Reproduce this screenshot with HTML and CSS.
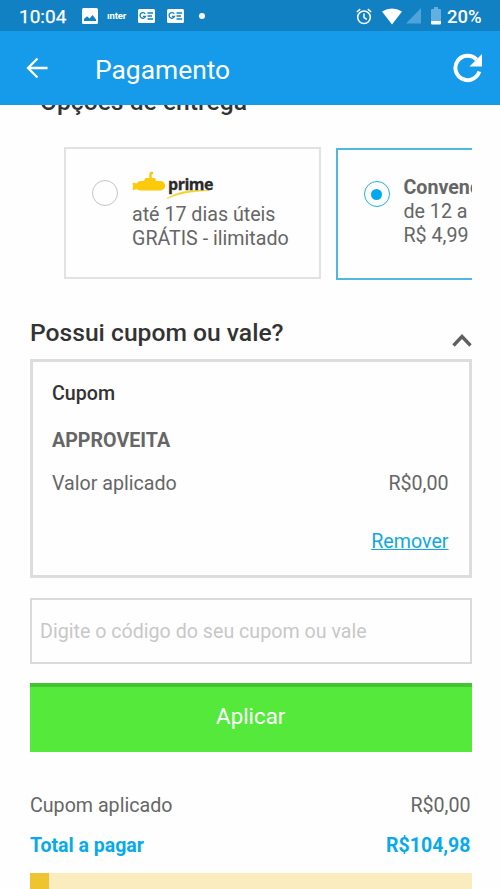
FILE: index.html
```html
<!DOCTYPE html>
<html lang="pt-BR">
<head>
<meta charset="utf-8">
<title>Pagamento</title>
<link rel="stylesheet" href="styles.css">
</head>
<body>
<div class="status">
  <span class="clock">10:04</span>
  <svg class="photo" width="16" height="16" viewBox="0 0 16 16"><rect width="16" height="16" rx="1.5" fill="#fff"/><path d="M2 13V11l3-2.700 2.500 2.200 3-3.500 3.500 4.500V13z" fill="#1181c4"/></svg>
  <span class="bank">ınter</span>
  <span class="news"><svg width="17" height="14" viewBox="0 0 17 14"><rect width="17" height="14" rx="1.5" fill="#fff"/><path d="M7.200 4.900A2.800 2.800 0 1 0 7.500 7.400H5M9.500 4h5.500M9.500 7h4.500M9.500 10h5.500" fill="none" stroke="#1181c4" stroke-width="1.3"/></svg></span>
  <span class="news"><svg width="17" height="14" viewBox="0 0 17 14"><rect width="17" height="14" rx="1.5" fill="#fff"/><path d="M7.200 4.900A2.800 2.800 0 1 0 7.500 7.400H5M9.500 4h5.500M9.500 7h4.500M9.500 10h5.500" fill="none" stroke="#1181c4" stroke-width="1.3"/></svg></span>
  <i class="dot"></i>
  <div class="system">
    <svg width="16" height="17" viewBox="0 0 16 17" fill="none" stroke="#fff" stroke-width="1.5"><circle cx="8" cy="9.3" r="6.3"/><path d="M8 5.500v4l2.800 1.800M.8 4 4.200 1.200M15.200 4l-3.400-2.800"/></svg>
    <svg class="wifi" width="20" height="17" viewBox="0 0 20 17"><path d="M0 3.600Q10-2.800 20 3.600L10 16.500z" fill="#fff"/></svg>
    <svg class="signal" width="15" height="16" viewBox="0 0 15 16"><path d="M15 0v15.500H0z" fill="#4fa3d9"/></svg>
    <svg class="battery" width="10" height="18" viewBox="0 0 10 18"><path d="M3 0h4v2h2a1 1 0 0 1 1 1v11H0V3a1 1 0 0 1 1-1h2z" fill="#62b0e2"/><path d="M0 14h10v2.500a1 1 0 0 1-1 1H1a1 1 0 0 1-1-1z" fill="#fff"/></svg>
    <span class="percent">20%</span>
  </div>
</div>
<header class="appbar">
  <svg width="22" height="22" viewBox="0 0 22 22" fill="none" stroke="#fff" stroke-width="2.3"><path d="M21.500 11H2M11.500 1.500 2 11l9.500 9.500"/></svg>
  <h1>Pagamento</h1>
  <svg class="reload" width="30" height="30" viewBox="0 0 30 30"><path d="M23.500 6.500A12.200 12.200 0 1 0 26.300 18.500" fill="none" stroke="#fff" stroke-width="4"/><path d="M29 1v12.500H16.500z" fill="#fff"/></svg>
</header>
<main>
  <h2 class="delivery-title">Opções de entrega</h2>
  <div class="options">
    <div class="option">
      <span class="radio"></span>
      <div class="detail">
        <div class="prime">
          <svg width="82" height="32" viewBox="0 0 82 32"><path d="M17.300 7V3.500Q17.300.8 19.500.8H21V3h-1.200v4H22q1.300 0 1.500 1.200l.5 1.800h4.500a4.700 4.700 0 0 1 0 9.400H8.500Q6 19.400 4.500 18L1.300 19.200Q.5 19 .8 16.700L1.200 15l-.4-1.500q-.3-2.300.7-2L4.500 12.500Q6 10 8.500 10H12l.6-1.800Q13 7 14.200 7z" fill="#fdc90b"/><path d="M35 27.500Q49 17.500 77 19.500 50 20.500 35 27.500z" fill="#f4d22c" stroke="#f4d22c" stroke-width=".6"/></svg>
          <b>prime</b>
        </div>
        <p>até 17 dias úteis</p>
        <p>GRÁTIS - ilimitado</p>
      </div>
    </div>
    <div class="option chosen">
      <span class="radio"></span>
      <div class="detail">
        <p class="name">Convencional</p>
        <p>de 12 a</p>
        <p>R$ 4,99</p>
      </div>
    </div>
  </div>
  <div class="coupon-head">
    <h2>Possui cupom ou vale?</h2>
    <svg width="20" height="13" viewBox="0 0 20 13" fill="none" stroke="#606060" stroke-width="3.3"><path d="m1.500 11.500 8.500-9 8.500 9"/></svg>
  </div>
  <section class="coupon">
    <h3>Cupom</h3>
    <p class="code">APPROVEITA</p>
    <div class="row"><span class="applied">Valor aplicado</span><span>R$0,00</span></div>
    <a class="remove">Remover</a>
  </section>
  <input class="field" type="text" placeholder="Digite o código do seu cupom ou vale">
  <button class="apply">Aplicar</button>
  <div class="row summary"><span>Cupom aplicado</span><span>R$0,00</span></div>
  <div class="row total"><span class="label">Total a pagar</span><span>R$104,98</span></div>
  <div class="notice"></div>
</main>
</body>
</html>
```
FILE: styles.css
```css
* { box-sizing: border-box; }
body {
  margin: 0;
  height: 889px;
  overflow: hidden;
  background: #fefefe;
  color: #666;
  font: 19.65px/24px Roboto, sans-serif;
}
h1, h2, h3, p { margin: 0; font-weight: 400; }
svg { display: block; flex: none; }

.status {
  display: flex;
  align-items: center;
  height: 31px;
  padding: 1px 18px 0 19px;
  background: #1181c4;
  color: #fff;
}
.clock { width: 63px; padding-top: 2px; font-size: 19px; font-weight: 400; -webkit-text-stroke: 0.25px #fff; }
.bank { width: 21px; margin: 0 10px 0 9px; font: 700 9.5px/12px Roboto, sans-serif; letter-spacing: -0.1px; }
.news { margin-right: 12px; }
.dot { width: 6px; height: 6px; margin-left: 3px; border-radius: 50%; background: #fff; }
.system { display: flex; align-items: center; margin-left: auto; }
.wifi { margin-left: 10px; }
.signal { margin-left: 4px; }
.battery { margin-left: 10px; }
.percent { width: 35px; margin-left: 6px; padding-top: 2px; font-size: 18.5px; font-weight: 500; white-space: nowrap; }

.appbar {
  display: flex;
  align-items: center;
  height: 74px;
  padding: 0 17px 0 26px;
  background: #169beb;
  color: #fff;
}
.appbar h1 { margin: 4px 0 0 47px; font-size: 26.4px; line-height: 32px; }
.reload { margin-left: auto; }

main { height: 784px; padding: 0 28.500px 0 30px; overflow: hidden; }
h2 { color: #333; font-size: 24.65px; font-weight: 500; line-height: 30px; }
.delivery-title { margin: -18px 0 0 10px; }
.options {
  display: flex;
  gap: 15px;
  height: 133px;
  margin-top: 30px;
  padding-left: 34px;
  overflow: hidden;
}
.option {
  display: flex;
  flex: none;
  width: 257px;
  height: 132px;
  padding: 22px 0 0 26px;
  border: 2px solid #e2e2e2;
}
.radio {
  flex: none;
  width: 26px;
  height: 26px;
  margin: 9px 14px 0 0;
  border: 1.500px solid #c5c5c5;
  border-radius: 50%;
}
.detail p { white-space: nowrap; }
.prime { position: relative; height: 32px; }
.prime b {
  position: absolute;
  left: 36px;
  top: 2px;
  color: #292929;
  font: 700 16px/22px "Open Sans", sans-serif;
  letter-spacing: -0.5px;
  -webkit-text-stroke: 0.3px #292929;
}
.chosen { height: 132px; margin-top: 1px; padding-left: 25.500px; border-color: #50b7df; }
.chosen .radio {
  display: grid;
  place-items: center;
  border-color: #23b0e0;
}
.chosen .radio::after { content: ""; width: 11px; height: 11px; border-radius: 50%; background: #03a9f0; }
.chosen .detail { padding-top: 4px; }
.name { font-weight: 700; }

.coupon-head { display: flex; justify-content: space-between; margin-top: 38px; height: 41px; }
.coupon-head svg { margin-top: 16px; }
.coupon {
  display: flex;
  flex-direction: column;
  height: 219px;
  padding: 20px 20px 0 19px;
  border: 3px solid #ddd;
}
h3 { color: #333; font-size: 19.65px; font-weight: 500; }
.code { margin-top: 23px; font-weight: 700; }
.row { display: flex; justify-content: space-between; }
.coupon .row { margin-top: 19px; }
.remove { align-self: flex-end; margin-top: 34px; color: #12a8de; text-decoration: underline; }
.field {
  display: block;
  width: 100%;
  height: 66px;
  margin-top: 20px;
  padding: 0 8px;
  border: 2px solid #dadada;
  background: none;
  font: inherit;
}
.field::placeholder { color: #c8c8c8; opacity: 1; }
.apply {
  display: block;
  width: 100%;
  height: 69px;
  margin-top: 19px;
  padding: 0 0 7px;
  border: 0;
  border-top: 4px solid #44c335;
  background: #54e93b;
  color: #fff;
  font: 22.3px/26px Roboto, sans-serif;
}
.summary { margin-top: 42px; padding-right: 1px; }
.total { margin-top: 16px; padding-right: 1px; color: #08aaea; font-weight: 700; font-size: 19.5px; }
.notice { height: 40px; margin-top: 15px; border-left: 19px solid #eec52e; background: #faecbf; }
```
